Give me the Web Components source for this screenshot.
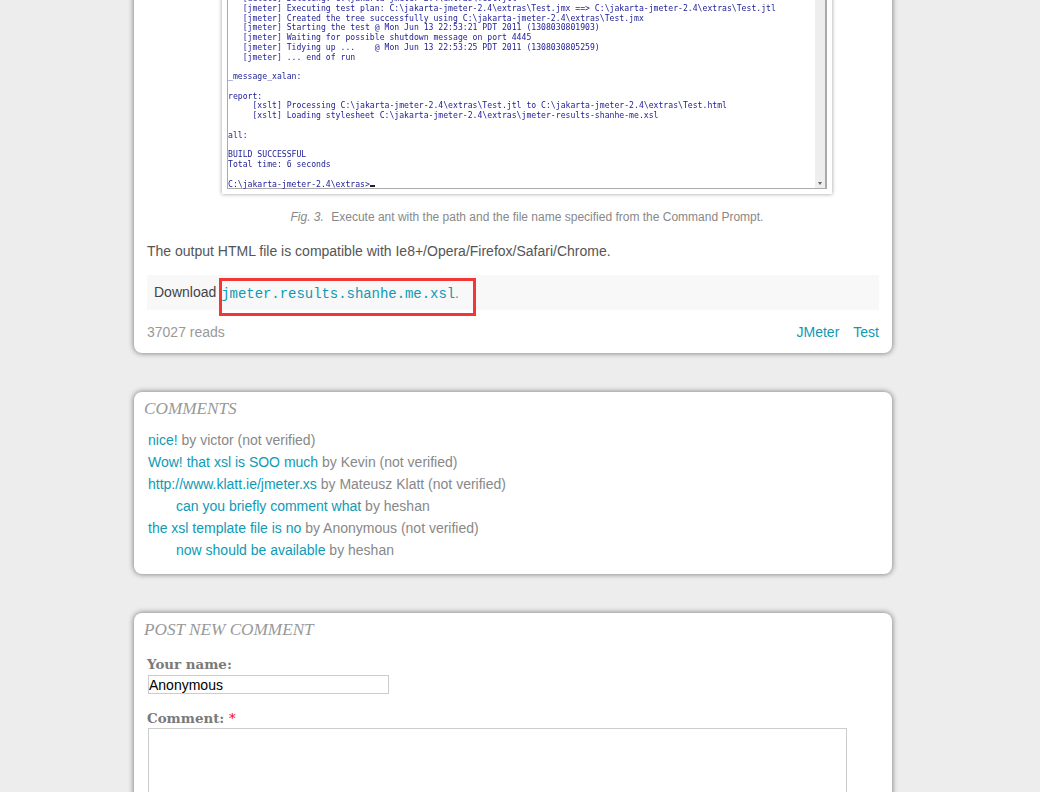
<!DOCTYPE html>
<html>
<head>
<meta charset="utf-8">
<title>JMeter results</title>
<style>
  html, body { margin: 0; height: 792px; overflow: hidden; background: #ededed; }
  body { font: 14px/22px "Liberation Sans", Arial, sans-serif; color: #555; }
  main { margin: -39px 0 0 134px; width: 758px; }
</style>
</head>
<body>
<main>
  <site-card>
    <console-figure caption="Execute ant with the path and the file name specified from the Command Prompt."></console-figure>
    <article-body></article-body>
  </site-card>
  <site-card heading="Comments">
    <comment-list></comment-list>
  </site-card>
  <site-card heading="Post new comment">
    <comment-form></comment-form>
  </site-card>
</main>
<script>
class SiteCard extends HTMLElement {
  constructor() {
    super();
    const root = this.attachShadow({ mode: 'open' });
    const heading = this.getAttribute('heading');
    root.innerHTML = `
      <style>
        :host { display: block; margin-bottom: 39px; background: #fff; border-radius: 8px; box-shadow: 0 0 5px 1px #8f8f8f; }
        h2 { margin: 0; padding: 7px 10px 0; font: italic 400 17.2px/20px "Liberation Serif", serif; text-transform: uppercase; color: #999; }
        .body { padding: 0 13px 0 13px; }
      </style>
      ${heading ? `<h2>${heading}</h2>` : ''}
      <div class="body"><slot></slot></div>`;
  }
}

const CONSOLE_TEXT = String.raw`   [delete] Deleting: C:\jakarta-jmeter-2.4\extras\Test.jtl
   [jmeter] Executing test plan: C:\jakarta-jmeter-2.4\extras\Test.jmx ==> C:\jakarta-jmeter-2.4\extras\Test.jtl
   [jmeter] Created the tree successfully using C:\jakarta-jmeter-2.4\extras\Test.jmx
   [jmeter] Starting the test @ Mon Jun 13 22:53:21 PDT 2011 (1308030801903)
   [jmeter] Waiting for possible shutdown message on port 4445
   [jmeter] Tidying up ...    @ Mon Jun 13 22:53:25 PDT 2011 (1308030805259)
   [jmeter] ... end of run

_message_xalan:

report:
     [xslt] Processing C:\jakarta-jmeter-2.4\extras\Test.jtl to C:\jakarta-jmeter-2.4\extras\Test.html
     [xslt] Loading stylesheet C:\jakarta-jmeter-2.4\extras\jmeter-results-shanhe-me.xsl

all:

BUILD SUCCESSFUL
Total time: 6 seconds

C:\jakarta-jmeter-2.4\extras>`;

class ConsoleFigure extends HTMLElement {
  constructor() {
    super();
    const root = this.attachShadow({ mode: 'open' });
    root.innerHTML = `
      <style>
        :host { display: block; padding: 25px 0 0 28px; }
        .frame { width: 600px; margin: 0 auto; padding: 5px; background: #fff; box-shadow: 0 0 4px #999; }
        .console { display: flex; height: 197px; border: 1px solid #aaa; border-width: 0 2px 1px 1px; }
        pre { flex: 1; margin: 0; padding-top: 3px; font: 8.15px/9.77px "DejaVu Sans Mono", "Liberation Mono", monospace; color: #22229a; filter: blur(.25px); }
        .cursor { display: inline-block; width: 5px; height: 1.5px; background: #222; }
        .bar { position: relative; width: 10px; background: #eee; }
        .bar::after { content: ""; position: absolute; left: 3px; bottom: 3px; border: 2px solid transparent; border-top: 3px solid #666; border-bottom: 0; }
        p { margin: 0; padding: 15px 0 0; text-align: center; font-size: 12px; line-height: 16px; color: #888; }
        i { margin-right: 4px; }
      </style>
      <div class="frame">
        <div class="console"><pre></pre><div class="bar"></div></div>
      </div>
      <p><i>Fig. 3.</i> ${this.getAttribute('caption')}</p>`;
    const pre = root.querySelector('pre');
    pre.textContent = CONSOLE_TEXT;
    const cursor = document.createElement('span');
    cursor.className = 'cursor';
    pre.appendChild(cursor);
  }
}

class ArticleBody extends HTMLElement {
  constructor() {
    super();
    const root = this.attachShadow({ mode: 'open' });
    root.innerHTML = `
      <style>
        :host { display: block; }
        a { color: #0e9ab5; text-decoration: none; }
        p { margin: 0; padding-top: 15px; line-height: 22px; color: #555; }
        .download { display: flex; align-items: center; height: 33px; margin-top: 13px; padding: 0 0 2px 7px; background: #f8f8f8; color: #444; }
        .file { position: relative; margin-left: 5px; top: 2px; color: #888; }
        .file a { font: 14px/22px "Liberation Mono", monospace; letter-spacing: -.05px; }
        .mark { position: absolute; left: -2px; top: -4px; width: 251px; height: 32px; border: 3px solid #f33737; }
        footer { display: flex; justify-content: space-between; padding: 11px 0 10px; color: #999; }
        nav { display: flex; gap: 14px; }
      </style>
      <p>The output HTML file is compatible with Ie8+/Opera/Firefox/Safari/Chrome.</p>
      <div class="download">Download <span class="file"><a href="#">jmeter.results.shanhe.me.xsl</a>.<span class="mark"></span></span></div>
      <footer><span>37027 reads</span><nav><a href="#">JMeter</a><a href="#">Test</a></nav></footer>`;
  }
}

class CommentList extends HTMLElement {
  constructor() {
    super();
    const rows = [
      ['nice!', 'victor (not verified)', 0],
      ['Wow! that xsl is SOO much', 'Kevin (not verified)', 0],
      ['http://www.klatt.ie/jmeter.xs', 'Mateusz Klatt (not verified)', 0],
      ['can you briefly comment what', 'heshan', 1],
      ['the xsl template file is no', 'Anonymous (not verified)', 0],
      ['now should be available', 'heshan', 1]
    ];
    const root = this.attachShadow({ mode: 'open' });
    root.innerHTML = `
      <style>
        :host { display: block; padding: 10px 0 13px 1px; color: #888; }
        div { height: 22px; line-height: 22px; }
        .sub { padding-left: 28px; }
        a { color: #0e9ab5; text-decoration: none; }
      </style>
      ${rows.map(r => `<div class="${r[2] ? 'sub' : ''}"><a href="#">${r[0]}</a> by ${r[1]}</div>`).join('')}`;
  }
}

class CommentForm extends HTMLElement {
  constructor() {
    super();
    const root = this.attachShadow({ mode: 'open' });
    root.innerHTML = `
      <style>
        :host { display: block; padding: 16px 0 40px 0; }
        label { display: block; font: 700 13.4px/16px "DejaVu Serif", serif; color: #7a7a7a; }
        b { color: #f00; font-weight: 400; }
        input, textarea { display: block; box-sizing: border-box; margin: 0 0 0 1px; padding: 0; border: 1px solid #ccc; background: #fff; font: 14px "Liberation Sans", sans-serif; color: #000; outline: 0; resize: none; }
        input { width: 241px; height: 19px; margin-top: 3px; margin-bottom: 16px; }
        textarea { width: 699px; height: 160px; margin-top: 1px; }
      </style>
      <label>Your name:</label>
      <input value="Anonymous">
      <label>Comment: <b>*</b></label>
      <textarea></textarea>`;
  }
}

customElements.define('site-card', SiteCard);
customElements.define('console-figure', ConsoleFigure);
customElements.define('article-body', ArticleBody);
customElements.define('comment-list', CommentList);
customElements.define('comment-form', CommentForm);
</script>
</body>
</html>
